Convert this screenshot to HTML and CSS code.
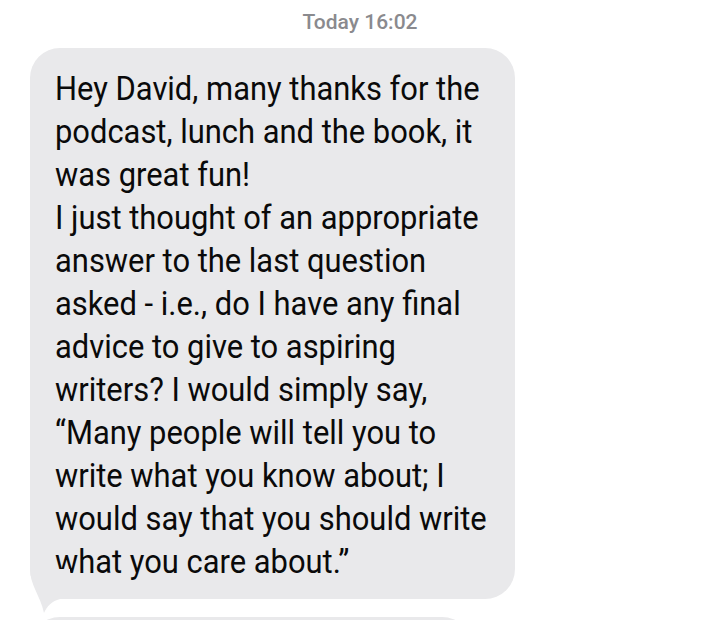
FILE: index.html
```html
<!DOCTYPE html>
<html lang="en">
<head>
<meta charset="utf-8">
<title>Message</title>
<link rel="stylesheet" href="styles.css">
</head>
<body>
<main class="thread">
  <div class="timestamp"><span class="day">Today</span> 16:02</div>
  <div class="bubble incoming">
    <p class="text">Hey David, many thanks for the<br>podcast, lunch and the book, it<br>was great fun!<br>I just thought of an appropriate<br>answer to the last question<br>asked - i.e., do I have any final<br>advice to give to aspiring<br>writers? I would simply say,<br>“Many people will tell you to<br>write what you know about; I<br>would say that you should write<br>what you care about.”</p>
    <svg class="tail" width="40" height="45" viewBox="0 -30 40 45" aria-hidden="true">
      <path d="M0 -30 C0 -14 10 -4 14 14 C17 7 22 2 30 0 L40 0 L40 -30 Z" fill="#e9e9eb"/>
    </svg>
  </div>
  <div class="bubble next"></div>
</main>
</body>
</html>
```
FILE: styles.css
```css
html, body {
  margin: 0;
  padding: 0;
  background: #ffffff;
}

body {
  font-family: Roboto, "Liberation Sans", Arial, sans-serif;
  overflow: hidden;
  height: 620px;
}

.thread {
  display: flex;
  flex-direction: column;
  align-items: flex-start;
  padding: 8px 0 0 30px;
}

.timestamp {
  align-self: stretch;
  margin-left: -30px;
  text-align: center;
  font-size: 21px;
  line-height: 28px;
  color: #8a8a8e;
  font-weight: 500;
}

.bubble {
  position: relative;
  background: #e9e9eb;
  border-radius: 30px;
}

.incoming {
  margin-top: 12px;
  width: 485px;
}

.text {
  margin: 0;
  padding: 19px 20px 16px 25px;
  font-size: 33.5px;
  line-height: 43px;
  color: #0a0a0a;
  white-space: nowrap;
  transform: scaleX(0.9225);
  transform-origin: 25px 0;
}

.tail {
  position: absolute;
  left: 0;
  bottom: -15px;
}

.next {
  margin-top: 18px;
  width: 442px;
  height: 60px;
}
```
